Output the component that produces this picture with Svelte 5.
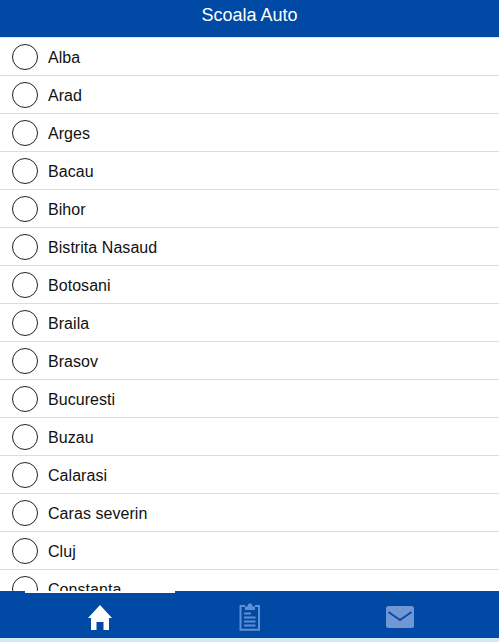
<script lang="ts">
    const counties = [
        "Alba", "Arad", "Arges", "Bacau", "Bihor", "Bistrita Nasaud", "Botosani", "Braila",
        "Brasov", "Bucuresti", "Buzau", "Calarasi", "Caras severin", "Cluj", "Constanta"
    ];
</script>

<div class="page">
    <header>Scoala Auto</header>

    <ul class="list">
        {#each counties as name}
            <li>
                <span class="radio"></span>
                <span class="name">{name}</span>
            </li>
        {/each}
    </ul>

    <div class="tabbar">
        <div class="notch"></div>
        <nav>
            <button aria-label="Home">
                <svg width="24" height="25" viewBox="0 0 24 25">
                    <path fill="#fff" d="M12 0 L24 13 H21 V25 H15.5 V17 H8.5 V25 H3 V13 H0 Z" />
                </svg>
            </button>
            <button aria-label="Tests">
                <svg width="22" height="28" viewBox="0 0 22 28" fill="none" stroke="#5f8fd3" stroke-width="2">
                    <path d="M6 3 H1.5 V26.8 H20 V3 H16" />
                    <path fill="#5f8fd3" stroke="none" d="M6 7 V3.5 H8.5 C8.5 -0.8 13.5 -0.8 13.5 3.5 H16 V7 Z" />
                    <path d="M5 10.5 H12 M5 14.5 H16.5 M5 18.5 H16.5 M5 22.5 H16.5" />
                </svg>
            </button>
            <button aria-label="Mail">
                <svg width="28" height="22" viewBox="0 0 28 22">
                    <rect width="28" height="22" rx="2.5" fill="#6f97d4" />
                    <path d="M2.5 6 L14 14 L25.5 6" fill="none" stroke="#0d4ba6" stroke-width="2" />
                </svg>
            </button>
        </nav>
    </div>
</div>

<style>
    :global(body) {
        margin: 0;
        background: #fff;
    }

    .page {
        display: flex;
        flex-direction: column;
        height: 642px;
        overflow: hidden;
        background: #d3e9fa;
        font-family: "Liberation Sans", Arial, sans-serif;
    }

    header {
        flex: none;
        height: 38px;
        box-sizing: border-box;
        padding-top: 5px;
        background: #0049a5;
        border-bottom: 1px solid #d3e9fa;
        color: #fff;
        font-size: 18px;
        line-height: 20px;
        text-align: center;
    }

    .list {
        flex: 1;
        min-height: 0;
        margin: 0;
        padding: 0;
        list-style: none;
        overflow: hidden;
        background: #fff;
    }

    li {
        display: flex;
        align-items: center;
        gap: 10px;
        height: 38px;
        box-sizing: border-box;
        padding: 1px 0 0 12px;
        border-bottom: 1px solid #dcdcdc;
        color: #111;
        font-size: 16px;
    }

    .name {
        padding-top: 2px;
        letter-spacing: 0.05px;
    }

    .radio {
        flex: none;
        width: 26px;
        height: 26px;
        box-sizing: border-box;
        border: 1px solid #222;
        border-radius: 50%;
    }

    .tabbar {
        flex: none;
        height: 47px;
        margin-bottom: 4px;
        background: #0049a5;
    }

    .notch {
        width: 150px;
        height: 2px;
        margin-left: 25px;
        background: #fff;
    }

    nav {
        display: grid;
        grid-template-columns: repeat(3, 150px);
        justify-content: center;
        box-sizing: border-box;
        height: 45px;
        padding-top: 3px;
    }

    button {
        display: flex;
        align-items: center;
        justify-content: center;
        padding: 0;
        background: none;
        border: 0;
    }
</style>
